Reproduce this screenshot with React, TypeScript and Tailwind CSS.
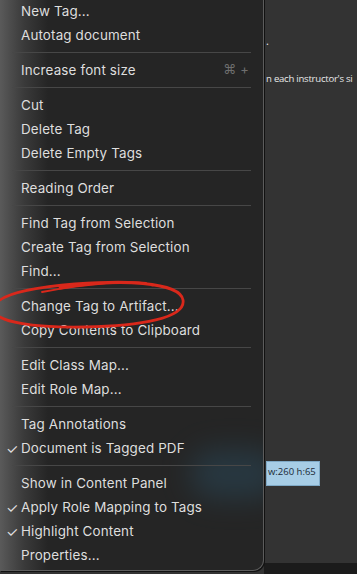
import React from 'react';

type Entry =
  | { kind: 'item'; label: string; checked?: boolean; shortcut?: string }
  | { kind: 'sep' };

const entries: Entry[] = [
  { kind: 'item', label: 'New Tag...' },
  { kind: 'item', label: 'Autotag document' },
  { kind: 'sep' },
  { kind: 'item', label: 'Increase font size', shortcut: '⌘ +' },
  { kind: 'sep' },
  { kind: 'item', label: 'Cut' },
  { kind: 'item', label: 'Delete Tag' },
  { kind: 'item', label: 'Delete Empty Tags' },
  { kind: 'sep' },
  { kind: 'item', label: 'Reading Order' },
  { kind: 'sep' },
  { kind: 'item', label: 'Find Tag from Selection' },
  { kind: 'item', label: 'Create Tag from Selection' },
  { kind: 'item', label: 'Find...' },
  { kind: 'sep' },
  { kind: 'item', label: 'Change Tag to Artifact...' },
  { kind: 'item', label: 'Copy Contents to Clipboard' },
  { kind: 'sep' },
  { kind: 'item', label: 'Edit Class Map...' },
  { kind: 'item', label: 'Edit Role Map...' },
  { kind: 'sep' },
  { kind: 'item', label: 'Tag Annotations' },
  { kind: 'item', label: 'Document is Tagged PDF', checked: true },
  { kind: 'sep' },
  { kind: 'item', label: 'Show in Content Panel' },
  { kind: 'item', label: 'Apply Role Mapping to Tags', checked: true },
  { kind: 'item', label: 'Highlight Content', checked: true },
  { kind: 'item', label: 'Properties...' },
];

// hand-drawn red ring around "Change Tag to Artifact..."
const RedCircle: React.FC = () => (
  <svg
    className="absolute left-0 top-[276px] pointer-events-none"
    width="200"
    height="60"
    viewBox="0 0 200 60"
    fill="none"
  >
    <path
      d="M60 12 C120 2 180 6 183 24 C186 42 140 50 85 51 C35 52 -5 46 -6 34 C-7 20 25 12 75 8 C115 5 140 6 152 9"
      stroke="#d9281b"
      strokeWidth="2.8"
      strokeLinecap="round"
    />
    <path
      d="M42 16 C90 7 130 5 146 7"
      stroke="#d9281b"
      strokeWidth="1.8"
      strokeLinecap="round"
    />
  </svg>
);

const docFont = { fontFamily: '"Open Sans", sans-serif' };

export default function App() {
  return (
    <div
      className="relative flex w-[357px] h-[574px] overflow-hidden bg-[#333333]"
      style={{ fontFamily: 'Inter, "Noto Sans", sans-serif' }}
    >
      {/* context menu */}
      <div className="relative -mt-px w-[264px] shrink-0 h-[572px] rounded-br-[11px] border-r border-b border-[#5c5c5c] bg-[#252525] overflow-hidden shadow-[1px_1px_0_#111]">
        <div className="absolute inset-y-0 left-0 w-[48px] bg-gradient-to-r from-[#5a5a5a] via-[#3a3a3a] to-transparent" />
        <div className="absolute left-[190px] top-[450px] w-[90px] h-[50px] rounded-full bg-[#2a4a5c] opacity-50 blur-[14px]" />
        <div className="relative flex flex-col text-[13.4px] text-[#dedede] tracking-[0.15px]">
          {entries.map((e, i) =>
            e.kind === 'sep' ? (
              <div key={i} className="h-[11px] flex items-center px-[12px]">
                <div className="h-px w-full bg-[#474747]" />
              </div>
            ) : (
              <div key={i} className="h-[24px] flex items-center pl-[6px] pr-[14px]">
                <span className="w-[15px] text-[14px]">{e.checked ? '✓' : ''}</span>
                <span className="flex-1 whitespace-nowrap">{e.label}</span>
                {e.shortcut && <span className="text-[#6e6e6e] text-[13px]">{e.shortcut}</span>}
              </div>
            )
          )}
        </div>
      </div>

      {/* document pane behind the menu */}
      <div className="flex-1 min-w-0 flex flex-col text-[#e8e8e8]" style={docFont}>
        <div className="flex-1 flex flex-col pl-[2px] pt-[34px]">
          <span className="text-[11px] leading-[14px]">.</span>
          <span className="mt-[24px] text-[9.6px] tracking-[-0.25px] leading-[14px] whitespace-nowrap">n each instructor's si</span>
          <span className="mt-[375px] self-start whitespace-nowrap h-[25px] bg-[#a7cde6] border border-[#7fa9c6] text-[9.5px] leading-[20px] text-[#1a2a36] pl-[1px] pr-[3px]">
            w:260 h:65
          </span>
        </div>
        <div className="h-[11px] bg-[#1b1b1b]" />
      </div>

      <RedCircle />
    </div>
  );
}
